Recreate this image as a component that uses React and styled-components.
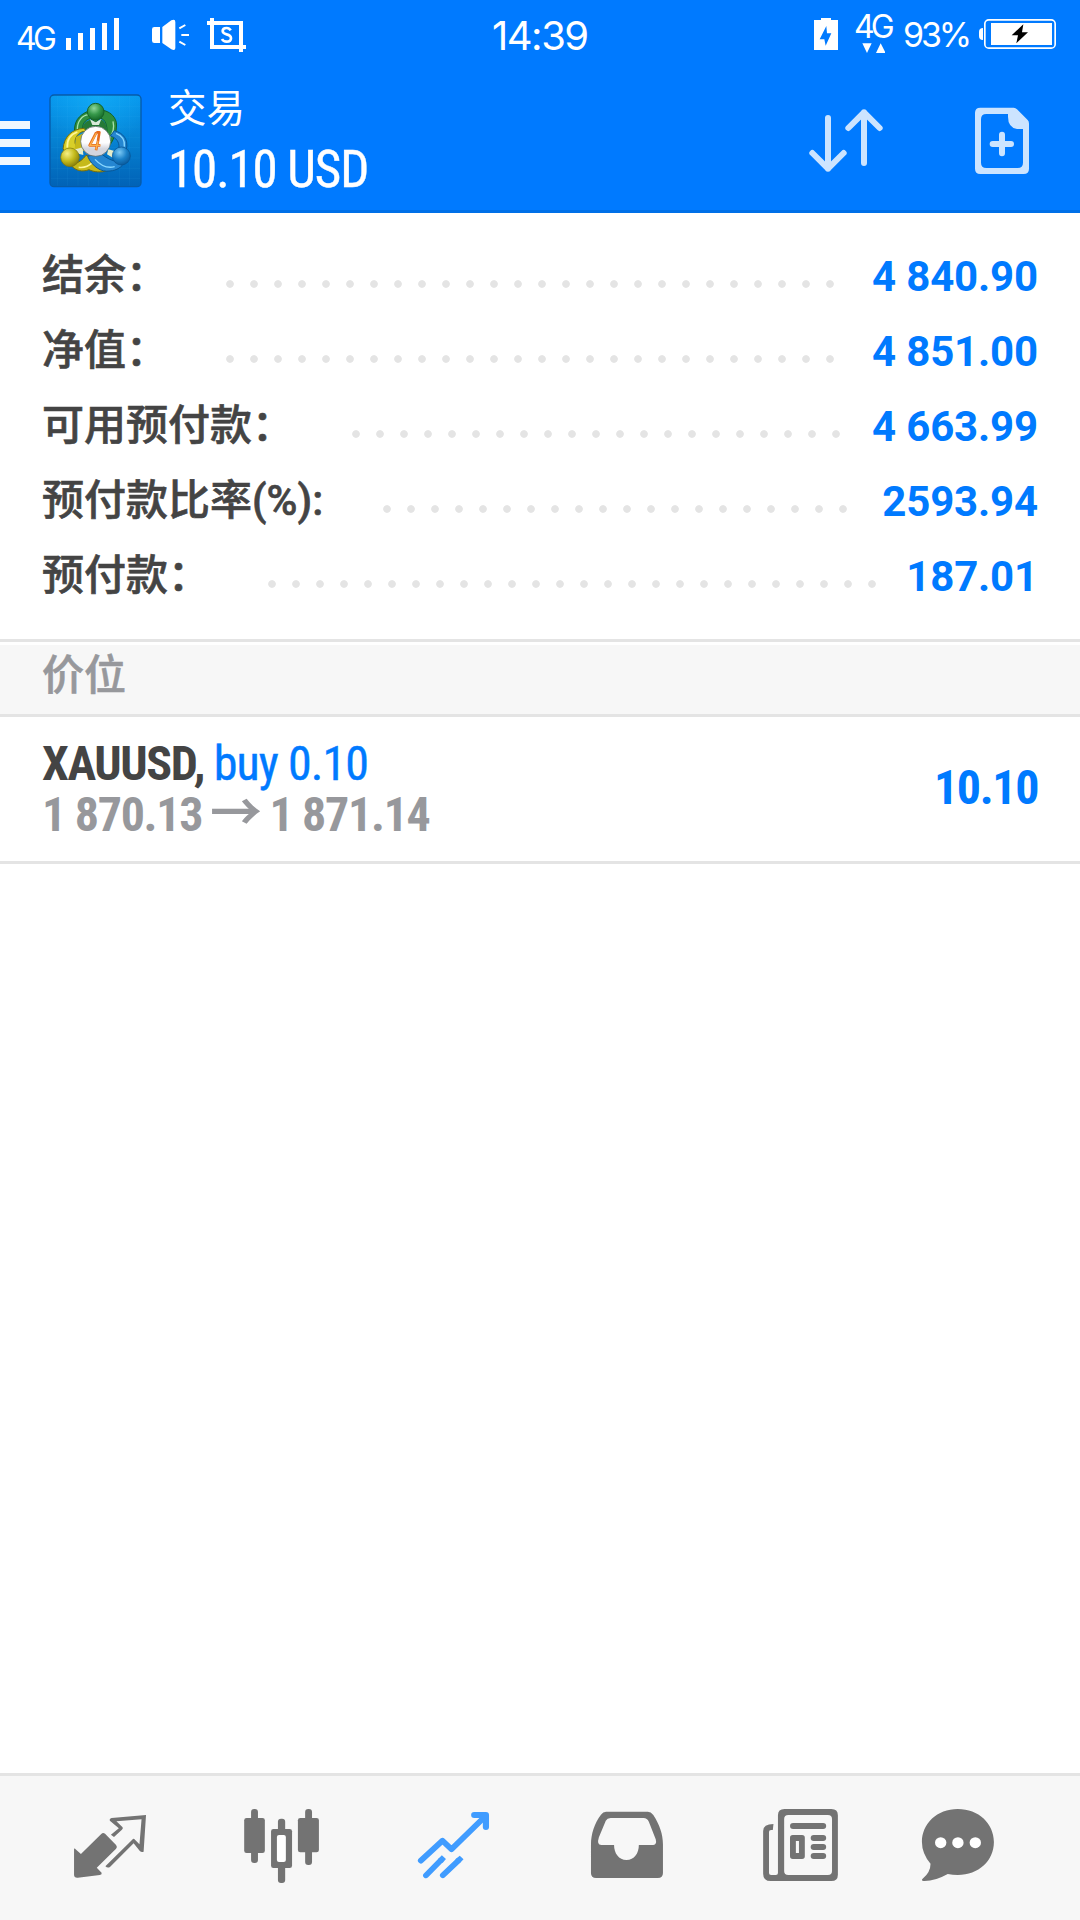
import React from "react";
import styled, { createGlobalStyle, css } from "styled-components";

const BLUE = "#007aff";
const LINE = "#e4e4e4";
const PANEL = "#f7f7f7";
const GREY = "#737373";

const GlobalStyle = createGlobalStyle`
  * { box-sizing: border-box; }
  body { margin: 0; background: #fff; }
`;

const condensed = css`
  font-family: "Roboto", "Liberation Sans", sans-serif;
  font-stretch: 75%;
`;

const Screen = styled.div`
  width: 1080px;
  height: 1920px;
  display: flex;
  flex-direction: column;
  background: #fff;
  overflow: hidden;
  font-family: "Roboto", "Noto Sans CJK SC", sans-serif;
`;

const Drawing = styled.svg`
  display: block;
  flex: none;
`;

const TopArea = styled.header`
  height: 213px;
  background: ${BLUE};
  border-bottom: 3px solid #0070e8;
  color: #fff;
`;

const StatusBar = styled.div`
  height: 69px;
  display: grid;
  grid-template-columns: 1fr 96px 1fr;
`;

const StatusSide = styled.div`
  display: flex;
  justify-content: ${(p) => (p.$end ? "flex-end" : "flex-start")};
  padding: ${(p) => (p.$end ? "0 24px 0 0" : "0 0 0 16px")};
`;

const StatusText = styled.span`
  font-family: "Inter", "Liberation Sans", sans-serif;
  font-size: ${(p) => p.$size}px;
  font-weight: ${(p) => p.$weight || 400};
  line-height: 40px;
  height: ${(p) => (p.$height ? `${p.$height}px` : "auto")};
  padding-top: ${(p) => p.$top}px;
  letter-spacing: ${(p) => p.$track || 0}px;
  width: ${(p) => p.$width}px;
  white-space: nowrap;
`;

const NetworkStack = styled.div`
  width: 49px;
  display: flex;
  flex-direction: column;
`;

const DataArrows = styled.div`
  padding-left: 7px;
`;

const Toolbar = styled.div`
  height: 141px;
  display: flex;
  align-items: flex-start;
`;

const MenuButton = styled.div`
  width: 30px;
  margin-top: 52px;
  display: flex;
  flex-direction: column;
  gap: 10px;
`;

const MenuBar = styled.span`
  height: 8px;
  background: #f0f7ff;
`;

const LogoBox = styled.div`
  margin: 25px 0 0 19px;
`;

const Titles = styled.div`
  margin-left: 25px;
  flex: 1;
`;

const Title = styled.div`
  margin-top: 14px;
  height: 44px;
  font-family: "Noto Sans CJK SC", sans-serif;
  font-size: 38.5px;
  line-height: 44px;
  font-weight: 400;
`;

const Amount = styled.div`
  ${condensed}
  font-size: 51px;
  line-height: 60px;
  margin-top: 13px;
  letter-spacing: -1.1px;
  -webkit-text-stroke: 0.4px currentColor;
`;

const Actions = styled.div`
  display: flex;
  gap: 90px;
  padding: 37px 50px 0 0;
`;

const Summary = styled.section`
  padding: 24px 42px 0 42px;
  height: 426px;
`;

const SummaryRow = styled.div`
  height: 75px;
  display: flex;
  align-items: center;
`;

const SummaryLabel = styled.span`
  font-family: "Roboto", "Noto Sans CJK SC", sans-serif;
  font-size: 42px;
  font-weight: 500;
  -webkit-text-stroke: 0.6px currentColor;
  line-height: 60px;
  padding-top: 3px;
  color: #444;
  white-space: nowrap;
`;

const Leader = styled.span`
  flex: none;
  width: ${(p) => p.$count * 24}px;
  height: 24px;
  margin: 19px auto 0 ${(p) => p.$lead}px;
  background: radial-gradient(circle at 12px 12px, #e4e4e4 3.4px, transparent 4.2px) 0 0 / 24px 24px repeat-x;
`;

const SummaryValue = styled.span`
  font-size: 42px;
  font-weight: 700;
  line-height: 60px;
  padding-top: 4px;
  letter-spacing: -0.15px;
  color: ${BLUE};
  white-space: nowrap;
`;

const SectionTitle = styled.h2`
  margin: 0;
  height: 78px;
  border-top: 3px solid ${LINE};
  border-bottom: 3px solid ${LINE};
  background: linear-gradient(#fff 3px, ${PANEL} 3px);
  padding-left: 42px;
  font-family: "Noto Sans CJK SC", sans-serif;
  font-size: 42px;
  font-weight: 500;
  -webkit-text-stroke: 0.6px currentColor;
  line-height: 60px;
  color: #97989c;
`;

const Position = styled.div`
  height: 147px;
  border-bottom: 3px solid ${LINE};
  padding: 21px 42px 0 42px;
  display: flex;
  justify-content: space-between;
`;

const PositionLine = styled.div`
  ${condensed}
  height: 51px;
  line-height: 51px;
  font-size: 48px;
  font-weight: ${(p) => (p.$bold ? 700 : 400)};
  letter-spacing: ${(p) => p.$track}px;
  color: ${(p) => p.$color};
  white-space: nowrap;
`;

const Side = styled.span`
  font-weight: 400;
  letter-spacing: -0.9px;
  -webkit-text-stroke: 0.4px currentColor;
  color: ${BLUE};
`;

const Arrow = styled.span`
  font-family: "Noto Sans CJK SC", sans-serif;
  font-size: 52px;
  font-weight: 700;
  font-stretch: normal;
  line-height: 0;
  margin: 0 -1px 0 -2px;
`;

const Profit = styled.div`
  ${condensed}
  font-size: 48px;
  font-weight: 700;
  line-height: 60px;
  margin-top: 20px;
  letter-spacing: -1.4px;
  color: ${BLUE};
`;

const Blank = styled.div`
  flex: 1;
`;

const TabBar = styled.nav`
  height: 147px;
  border-top: 3px solid ${LINE};
  background: ${PANEL};
  padding: 0 24px;
  display: flex;
`;

const Tab = styled.div`
  width: 172px;
  display: flex;
  align-items: center;
  justify-content: center;
  color: ${(p) => (p.$active ? "#409cff" : GREY)};
`;

function Glyph({ w, h, box, children }) {
  return (
    <Drawing width={w} height={h} viewBox={box} preserveAspectRatio="none" fill="currentColor">
      {children}
    </Drawing>
  );
}

function Logo() {
  return (
    <Glyph w={94} h={94} box="27 27 282 282">
      <defs>
        <linearGradient id="tile" x1="0" y1="0" x2="0" y2="1">
          <stop offset="0" stopColor="#0797ee" />
          <stop offset="0.5" stopColor="#0581d2" />
          <stop offset="1" stopColor="#0162b6" />
        </linearGradient>
        <radialGradient id="glow" cx="0.5" cy="0" r="0.6">
          <stop offset="0" stopColor="#16b5fb" stopOpacity="0.6" />
          <stop offset="1" stopColor="#16b5fb" stopOpacity="0" />
        </radialGradient>
        <radialGradient id="green" cx="0.4" cy="0.3" r="0.75">
          <stop offset="0" stopColor="#8fd79a" />
          <stop offset="0.5" stopColor="#36984a" />
          <stop offset="1" stopColor="#126425" />
        </radialGradient>
        <radialGradient id="yellow" cx="0.35" cy="0.3" r="0.8">
          <stop offset="0" stopColor="#f5f087" />
          <stop offset="0.5" stopColor="#c5bb1d" />
          <stop offset="1" stopColor="#7b7208" />
        </radialGradient>
        <radialGradient id="blue" cx="0.4" cy="0.3" r="0.8">
          <stop offset="0" stopColor="#7cc9f5" />
          <stop offset="0.5" stopColor="#1a80c8" />
          <stop offset="1" stopColor="#07508f" />
        </radialGradient>
        <linearGradient id="disc" x1="0" y1="0" x2="0" y2="1">
          <stop offset="0.55" stopColor="#fdfdfe" />
          <stop offset="0.75" stopColor="#d3d5de" />
        </linearGradient>
      </defs>
      <rect x="30" y="30" width="273" height="275" rx="12" fill="url(#tile)" stroke="#075ba8" strokeWidth="4" />
      <rect x="32" y="32" width="269" height="271" rx="11" fill="url(#glow)" />
      <path d="M52 33V302M83 33V302M114 33V302M145 33V302M176 33V302M207 33V302M238 33V302M269 33V302M33 64H300M33 95H300M33 126H300M33 157H300M33 188H300M33 219H300M33 250H300M33 281H300" stroke="#5bc3f5" strokeOpacity="0.12" strokeWidth="2" />
      <path d="M146 78C114 91 101 112 104 143L126 139C127 116 135 104 151 101L167 112L181 99C196 104 202 119 201 145L209 181C224 160 232 133 229 112C224 91 206 79 189 76Z" fill="#2e8e3e" stroke="#13612a" strokeWidth="3" />
      <path d="M126 139C127 120 135 108 151 104L167 114L181 103C196 108 202 122 201 145Z" fill="#257a37" />
      <path d="M150 103L167 112L184 102L177 120H157Z" fill="#d9ead9" />
      <path d="M112 132C112 108 127 91 145 89M219 109C224 130 218 143 211 157" fill="none" stroke="#a8e1ad" strokeWidth="4" />
      <path d="M132 130C96 132 73 153 69 192L83 205L116 194C105 182 101 169 110 154C117 144 126 138 139 139Z" fill="#d8cf29" stroke="#786d0c" strokeWidth="3" />
      <path d="M108 156L138 140V200L104 190Z" fill="#c6b919" />
      <path d="M104 235C118 233 129 223 138 211L169 219L204 256C181 264 162 261 147 254C127 262 107 257 94 242Z" fill="#c6b919" stroke="#776b0c" strokeWidth="3" />
      <path d="M82 188C80 163 92 148 112 141M116 247C133 249 147 243 157 233" fill="none" stroke="#fff69a" strokeWidth="5" />
      <path d="M143 214C156 244 184 263 210 258C231 256 246 246 252 233L220 227C203 222 191 212 181 204ZM211 153C229 158 238 171 237 188L259 194C266 164 250 144 223 137Z" fill="#2586d1" stroke="#075696" strokeWidth="3" />
      <path d="M228 145C247 152 255 166 253 185M165 223C185 245 205 250 224 245" fill="none" stroke="#8ad8ff" strokeWidth="4" />
      <path d="M101 194L128 187L130 210L115 206ZM205 193L226 199L218 218L201 208Z" fill="#e5eccb" />
      <circle cx="167" cy="80" r="25" fill="url(#green)" stroke="#166329" strokeWidth="3" />
      <circle cx="90" cy="217" r="28" fill="url(#yellow)" stroke="#81750b" strokeWidth="2" />
      <circle cx="244" cy="213" r="27" fill="url(#blue)" stroke="#07518f" strokeWidth="2" />
      <circle cx="167" cy="169" r="45" fill="url(#disc)" stroke="#4b5d5b" strokeWidth="2" />
      <path d="M169 142L149 181H181M174 168L168 196M169 142H178L174 168" fill="none" stroke="#e66a1c" strokeWidth="8" strokeLinejoin="round" />
      <path d="M169 144L150 181H181M174 168L168 194" fill="none" stroke="#fbb04b" strokeWidth="4" />
    </Glyph>
  );
}

const rows = [
  { label: "结余：", value: "4 840.90", dots: 26, lead: 50 },
  { label: "净值：", value: "4 851.00", dots: 26, lead: 50 },
  { label: "可用预付款：", value: "4 663.99", dots: 21, lead: 50 },
  { label: "预付款比率(%):", value: "2593.94", dots: 20, lead: 52 },
  { label: "预付款：", value: "187.01", dots: 26, lead: 50 },
];

const tabs = [
  {
    id: "quotes",
    box: "162.6 102 313.6 324",
    art: (
      <>
        <path d="M215 266Q217 265 221 269L235 282L294 222Q299 216 305 221L337 255Q342 261 337 266L281 323L295 338Q297 343 290 345L226 353Q215 354 215 344Z" />
        <path fillRule="evenodd" d="M322 224L345 205L319 182Q317 176 324 174L424 165L417 275Q411 278 406 273L388 250L320 320Q313 326 306 319L384 239Q388 234 392 239L405 253L411 178L338 184L356 202Q358 206 354 209L331 231Z" />
      </>
    ),
  },
  {
    id: "charts",
    box: "662 102 313.6 324",
    art: (
      <>
        <rect x="729" y="147" width="20" height="162" rx="9" />
        <rect x="709" y="174" width="60" height="105" rx="7" />
        <rect x="886" y="147" width="20" height="168" rx="9" />
        <rect x="865" y="174" width="61" height="103" rx="7" />
        <rect x="807" y="176" width="21" height="193" rx="9" />
        <rect x="787" y="207" width="61" height="117" rx="7" />
        <rect x="804" y="225" width="26" height="81" rx="6" fill="#fff" />
      </>
    ),
  },
  {
    id: "trade",
    active: true,
    box: "1161.5 102 313.6 324",
    art: (
      <>
        <path d="M1222 302L1285 242L1311 268L1407 171" fill="none" stroke="currentColor" strokeWidth="17" strokeLinecap="round" strokeLinejoin="round" />
        <path d="M1377 156H1411Q1420 156 1420 165V201Q1420 210 1411 210Q1402 210 1402 201V174H1377Q1368 174 1368 165Q1368 156 1377 156Z" />
        <path d="M1237 346L1279 302M1286 346L1329 304" fill="none" stroke="currentColor" strokeWidth="17" strokeLinecap="round" />
        <path d="M1283 286L1295 297L1285 309L1272 297ZM1335 287L1346 298L1335 310L1322 298Z" />
      </>
    ),
  },
  {
    id: "history",
    box: "92.9 102 313.6 324",
    art: (
      <path
        fillRule="evenodd"
        d="M192 155H313Q322 155 329 165C347 194 357 222 357 253V339Q357 354 342 354H163Q148 354 148 339V253C148 222 158 190 177 164Q183 155 192 155ZM205 174Q195 174 191 182L171 232Q164 255 178 255H215C215 280 229 300 251 300C274 300 287 280 287 255H329Q340 254 336 238L316 185Q311 174 301 174Z"
      />
    ),
  },
  {
    id: "news",
    box: "592.4 102 313.6 324",
    art: (
      <>
        <path fillRule="evenodd" d="M710 147H846Q865 147 865 166V344Q865 363 846 363H670Q648 363 648 341V213Q648 192 678 192L676 210H671Q665 210 665 216V339Q665 345 671 345H685Q691 345 691 339V166Q691 147 710 147ZM721 165Q709 165 709 177V333Q709 345 721 345H836Q848 345 848 333V177Q848 165 836 165Z" />
        <rect x="726" y="189" width="105" height="18" rx="9" />
        <path fillRule="evenodd" d="M734 225H761Q769 225 769 233V289Q769 297 761 297H734Q726 297 726 289V233Q726 225 734 225ZM743 243V279H752V243Z" />
        <rect x="786" y="225" width="45" height="18" rx="9" />
        <rect x="786" y="252" width="45" height="18" rx="9" />
        <rect x="786" y="279" width="45" height="18" rx="9" />
      </>
    ),
  },
  {
    id: "chat",
    box: "1091.8 102 313.6 324",
    art: (
      <>
        <path d="M1213 147C1274 147 1318 191 1318 246C1318 302 1274 345 1213 345Q1198 345 1184 342Q1146 364 1114 363Q1106 361 1111 356Q1134 337 1134 311Q1109 281 1109 246C1109 191 1153 147 1213 147Z" />
        <g fill="#fff">
          <circle cx="1163.500" cy="248" r="16.500" />
          <circle cx="1213.500" cy="248" r="16.500" />
          <circle cx="1264" cy="248" r="16.500" />
        </g>
      </>
    ),
  },
];

export default function App() {
  return (
    <Screen>
      <GlobalStyle />
      <TopArea>
        <StatusBar>
          <StatusSide>
            <StatusText $size={32} $top={19} $width={48} $track={-3.6}>4G</StatusText>
            <Glyph w={182} h={69} box="192 0 546 207">
              <path d="M198 114h15v36h-15zM234 99h15v51h-15zM270 84h15v66h-15zM306 69h15v81h-15zM342 54h15v96h-15z" />
              <path d="M463 81H480V129H463Q456 129 456 122V88Q456 81 463 81ZM487 81L514 61Q526 56 526 66V144Q526 153 514 148L487 129Z" />
              <path d="M538 85L556 75M544 105H567M538 125L556 135" stroke="currentColor" strokeWidth="6" />
              <path fillRule="evenodd" d="M630 54H642V63H729V135H738V147H729V156H717V147H630V75H621V63H630ZM642 75V135H717V75Z" />
              <path d="M692 91Q688 84 680 84Q668 84 668 93Q668 100 680 103Q693 106 693 115Q693 125 680 125Q670 125 666 117" fill="none" stroke="currentColor" strokeWidth="8" />
            </Glyph>
          </StatusSide>
          <StatusText $size={40} $top={16} $width={96} $track={-1.5}>14:39</StatusText>
          <StatusSide $end>
            <Glyph w={40} h={69} box="102 0 120 207">
              <path fillRule="evenodd" d="M102 60H123V54H153V60H174V150H102ZM139 78L119 118H133L137 137L154 100H141Z" />
            </Glyph>
            <NetworkStack>
              <StatusText $size={32} $top={7} $width={49} $height={43} $track={-4}>4G</StatusText>
              <DataArrows>
                <Glyph w={24} h={11} box="243 129 72 33">
                  <path d="M247 130H275L261 159ZM288 159H317L302 130Z" />
                </Glyph>
              </DataArrows>
            </NetworkStack>
            <StatusText $size={34} $top={15} $width={76} $track={-3.2}>93%</StatusText>
            <Glyph w={77} h={69} box="597 0 231 207">
              <path d="M609 84V120Q597 120 597 108V96Q597 84 609 84Z" />
              <rect x="614.500" y="59.500" width="211" height="85" rx="12" fill="none" stroke="currentColor" strokeWidth="5" />
              <rect x="633" y="69" width="183" height="66" />
              <path d="M730 73L695 106H714L709 130L744 97H726Z" fill="#000" />
            </Glyph>
          </StatusSide>
        </StatusBar>
        <Toolbar>
          <MenuButton>
            <MenuBar />
            <MenuBar />
            <MenuBar />
          </MenuButton>
          <LogoBox>
            <Logo />
          </LogoBox>
          <Titles>
            <Title>交易</Title>
            <Amount>10.10 USD</Amount>
          </Titles>
          <Actions>
            <Glyph w={76} h={70} box="84 318 228 210">
              <path d="M144 354V506M97 459L144 506L191 459M252 489V337M205 384L252 337L299 384" fill="none" stroke="#cce4ff" strokeWidth="18" strokeLinecap="round" strokeLinejoin="round" />
            </Glyph>
            <Glyph w={56} h={70} box="582 318 168 210">
              <path fill="#cce4ff" fillRule="evenodd" d="M601 323H701Q707 324 711 328L743 360Q747 364 747 371V506Q747 522 731 522H601Q585 522 585 506V339Q585 323 601 323ZM619 342Q603 342 603 358V488Q603 504 619 504H713Q729 504 729 488V387H711Q684 382 684 350V342Z" />
              <path d="M638 432H693M666 404V460" stroke="#cce4ff" strokeWidth="18" strokeLinecap="round" />
            </Glyph>
          </Actions>
        </Toolbar>
      </TopArea>
      <Summary>
        {rows.map((r) => (
          <SummaryRow key={r.label}>
            <SummaryLabel>{r.label}</SummaryLabel>
            <Leader $count={r.dots} $lead={r.lead} />
            <SummaryValue>{r.value}</SummaryValue>
          </SummaryRow>
        ))}
      </Summary>
      <SectionTitle>价位</SectionTitle>
      <Position>
        <div>
          <PositionLine $bold $track={-1.4} $color="#444">
            XAUUSD, <Side>buy 0.10</Side>
          </PositionLine>
          <PositionLine $bold $track={-1.3} $color="#97989c">
            1 870.13 <Arrow>→</Arrow> 1 871.14
          </PositionLine>
        </div>
        <Profit>10.10</Profit>
      </Position>
      <Blank />
      <TabBar>
        {tabs.map((t) => (
          <Tab key={t.id} $active={t.active}>
            <Glyph w={108} h={108} box={t.box}>
              {t.art}
            </Glyph>
          </Tab>
        ))}
      </TabBar>
    </Screen>
  );
}
